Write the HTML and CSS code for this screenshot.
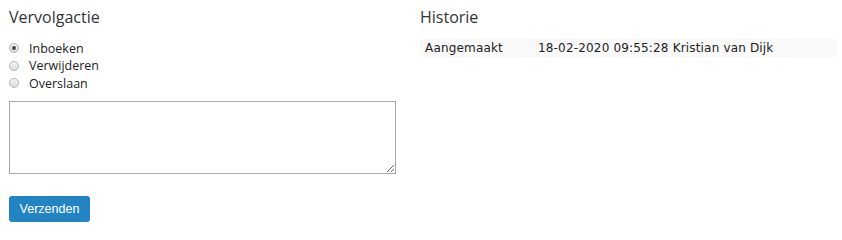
FILE: index.html
```html
<!DOCTYPE html>
<html lang="nl">
<head>
<meta charset="utf-8">
<title>Vervolgactie</title>
<link rel="stylesheet" href="styles.css">
</head>
<body>
<div class="page">
  <section class="col col-left">
    <h2 class="title">Vervolgactie</h2>
    <div class="radios">
      <label class="radio"><input type="radio" name="actie" checked><span>Inboeken</span></label>
      <label class="radio"><input type="radio" name="actie"><span>Verwijderen</span></label>
      <label class="radio"><input type="radio" name="actie"><span>Overslaan</span></label>
    </div>
    <textarea class="note"></textarea>
    <div class="actions">
      <button class="btn" type="button">Verzenden</button>
    </div>
  </section>
  <section class="col col-right">
    <h2 class="title">Historie</h2>
    <table class="history">
      <tr>
        <td class="h-label">Aangemaakt</td>
        <td class="h-value">18-02-2020 09:55:28 Kristian van Dijk</td>
      </tr>
    </table>
  </section>
</div>
</body>
</html>
```

FILE: styles.css
```css
html, body {
  margin: 0;
  padding: 0;
  background: #ffffff;
}

.page {
  display: grid;
  grid-template-columns: 411px 417px;
  padding: 0 0 0 9px;
  color: #333333;
}

.title {
  margin: 0;
  padding-top: 6px;
  font-family: "Open Sans", sans-serif;
  font-weight: 400;
  font-size: 16px;
  line-height: 22px;
  color: #333333;
}

.radios {
  display: flex;
  flex-direction: column;
  margin-top: 11.5px;
}

.radio {
  display: flex;
  align-items: center;
  height: 17.5px;
  font-family: "Open Sans", sans-serif;
  font-size: 12.5px;
  color: #222222;
}

.radio input {
  appearance: none;
  -webkit-appearance: none;
  box-sizing: border-box;
  margin: 0 10px 0 0;
  width: 10px;
  height: 10px;
  border: 1px solid #b4b4b4;
  border-radius: 50%;
  background: linear-gradient(#f4f4f4, #dcdcdc);
  display: grid;
  place-items: center;
}

.radio input:checked::after {
  content: "";
  width: 4px;
  height: 4px;
  border-radius: 50%;
  background: #4a4a4a;
}

.note {
  display: block;
  box-sizing: border-box;
  width: 387px;
  height: 73px;
  margin: 8.5px 0 0 0;
  border: 1px solid #a9a9a9;
  padding: 2px;
  resize: vertical;
}

.actions {
  margin-top: 22px;
}

.btn {
  box-sizing: border-box;
  width: 81px;
  height: 26px;
  border: 0;
  border-radius: 3px;
  background: #2284c2;
  color: #ffffff;
  font-family: "Liberation Sans", Arial, sans-serif;
  font-size: 12.5px;
  padding: 0;
}

.history {
  margin-top: 11px;
  width: 417px;
  border-collapse: collapse;
  background: #f9f9f9;
  font-family: "DejaVu Sans", Verdana, sans-serif;
  font-size: 12px;
  letter-spacing: 0.17px;
  color: #222222;
}

.history td {
  padding: 0 5px;
  height: 18px;
  line-height: 18px;
  vertical-align: middle;
}

.h-label {
  width: 103px;
}
```
